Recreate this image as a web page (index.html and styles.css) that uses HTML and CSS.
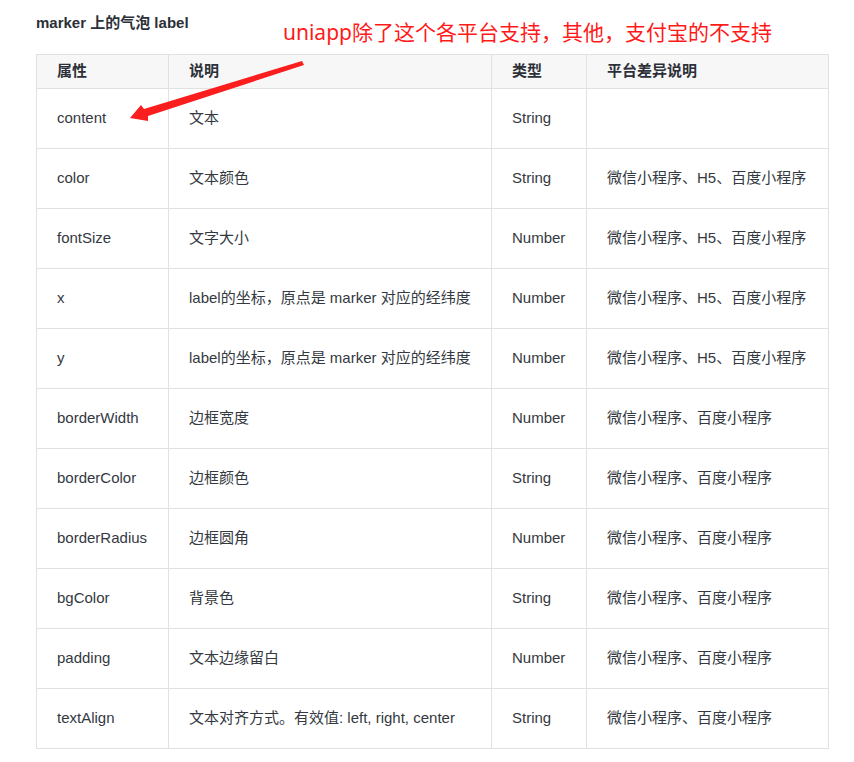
FILE: index.html
```html
<!DOCTYPE html>
<html>
<head>
<meta charset="utf-8">
<link rel="stylesheet" href="styles.css">
</head>
<body>
<div class="page">
  <h4 class="title">marker 上的气泡 label</h4>
  <table class="props">
    <thead>
      <tr><th class="c1">属性</th><th class="c2">说明</th><th class="c3">类型</th><th class="c4">平台差异说明</th></tr>
    </thead>
    <tbody>
      <tr><td>content</td><td>文本</td><td>String</td><td></td></tr>
      <tr><td>color</td><td>文本颜色</td><td>String</td><td>微信小程序、H5、百度小程序</td></tr>
      <tr><td>fontSize</td><td>文字大小</td><td>Number</td><td>微信小程序、H5、百度小程序</td></tr>
      <tr><td>x</td><td>label的坐标，原点是 marker 对应的经纬度</td><td>Number</td><td>微信小程序、H5、百度小程序</td></tr>
      <tr><td>y</td><td>label的坐标，原点是 marker 对应的经纬度</td><td>Number</td><td>微信小程序、H5、百度小程序</td></tr>
      <tr><td>borderWidth</td><td>边框宽度</td><td>Number</td><td>微信小程序、百度小程序</td></tr>
      <tr><td>borderColor</td><td>边框颜色</td><td>String</td><td>微信小程序、百度小程序</td></tr>
      <tr><td>borderRadius</td><td>边框圆角</td><td>Number</td><td>微信小程序、百度小程序</td></tr>
      <tr><td>bgColor</td><td>背景色</td><td>String</td><td>微信小程序、百度小程序</td></tr>
      <tr><td>padding</td><td>文本边缘留白</td><td>Number</td><td>微信小程序、百度小程序</td></tr>
      <tr><td>textAlign</td><td>文本对齐方式。有效值: left, right, center</td><td>String</td><td>微信小程序、百度小程序</td></tr>
    </tbody>
  </table>
  <div class="note">uniapp除了这个各平台支持，其他，支付宝的不支持</div>
  <svg class="arrow" width="854" height="762" viewBox="0 0 854 762">
    <polygon points="130,118 141,105 144,109 302,61 304,65 148,116 148,121" fill="#fa1e1e"/>
  </svg>
</div>
</body>
</html>
```
FILE: styles.css
```css
html, body {
  margin: 0;
  padding: 0;
  background: #ffffff;
}
.page {
  position: relative;
  width: 854px;
  height: 762px;
  padding: 13px 0 0 36px;
  box-sizing: border-box;
  font-family: "Liberation Sans", "Noto Sans CJK SC", sans-serif;
  color: #34393f;
}
.title {
  margin: 0;
  font-size: 15px;
  line-height: 20px;
  font-weight: bold;
  color: #2c3038;
}
.props {
  margin-top: 21px;
  border-collapse: collapse;
  width: 792px;
  font-size: 15px;
  table-layout: fixed;
}
.props th, .props td {
  border: 1px solid #e1e1e1;
  padding: 0 20px;
  text-align: left;
  vertical-align: middle;
  box-sizing: border-box;
  line-height: 20px;
}
.props th {
  height: 34px;
  padding-bottom: 2px;
  background: #f7f7f7;
  font-weight: bold;
  color: #2c3038;
}
.props td {
  height: 60px;
  padding-bottom: 1px;
}
.c1 { width: 132px; }
.c2 { width: 323px; }
.c3 { width: 95px; }
.c4 { width: 242px; }
.note {
  position: absolute;
  left: 283px;
  top: 19px;
  font-size: 21px;
  line-height: 26px;
  color: #ff1a1a;
  font-family: "Noto Sans", "Noto Sans CJK SC", sans-serif;
  white-space: nowrap;
}
.arrow {
  position: absolute;
  left: 0;
  top: 0;
}
```
